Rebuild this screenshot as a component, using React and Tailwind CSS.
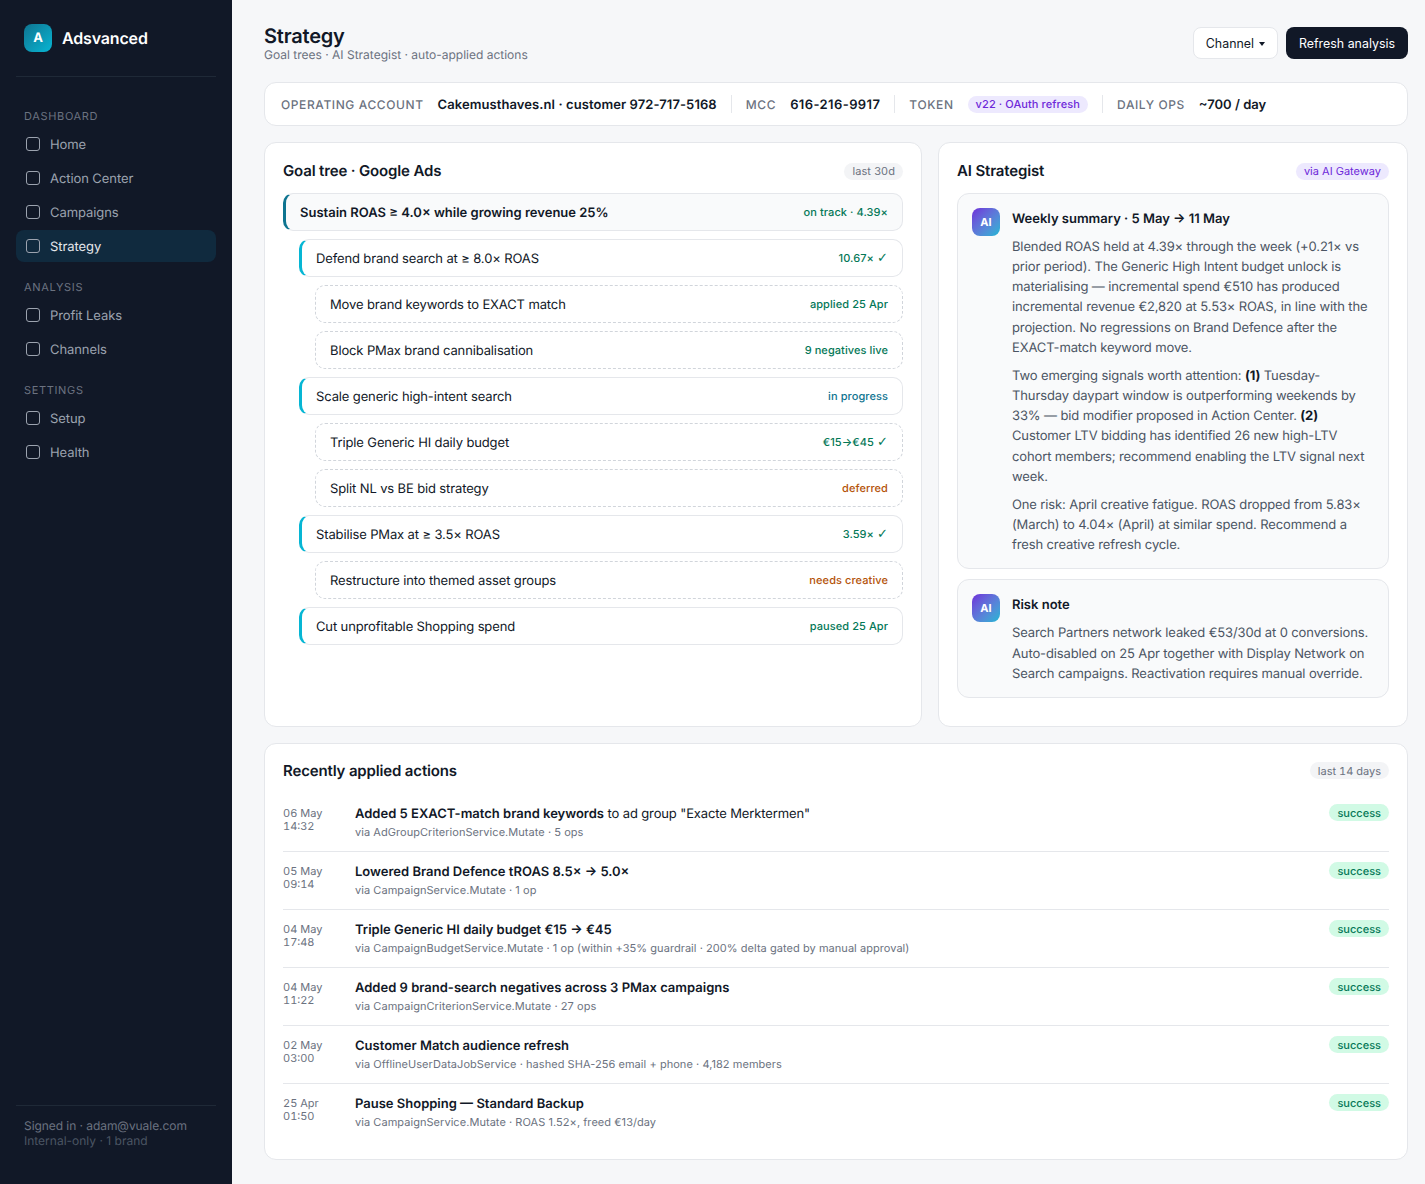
import React from "react";

const nav = [
  { h: "DASHBOARD", items: ["Home", "Action Center", "Campaigns", "Strategy"] },
  { h: "ANALYSIS", items: ["Profit Leaks", "Channels"] },
  { h: "SETTINGS", items: ["Setup", "Health"] },
];

const green = "text-[#047857]";
const orange = "text-[#b45309]";

const tree = [
  { l: 1, t: "Defend brand search at ≥ 8.0× ROAS", s: "10.67×", k: true, c: green },
  { l: 2, t: "Move brand keywords to EXACT match", s: "applied 25 Apr", c: green },
  { l: 2, t: "Block PMax brand cannibalisation", s: "9 negatives live", c: green },
  { l: 1, t: "Scale generic high-intent search", s: "in progress", c: "text-[#0e7490]" },
  { l: 2, t: "Triple Generic HI daily budget", s: "€15→€45", k: true, c: green },
  { l: 2, t: "Split NL vs BE bid strategy", s: "deferred", c: orange },
  { l: 1, t: "Stabilise PMax at ≥ 3.5× ROAS", s: "3.59×", k: true, c: green },
  { l: 2, t: "Restructure into themed asset groups", s: "needs creative", c: orange },
  { l: 1, t: "Cut unprofitable Shopping spend", s: "paused 25 Apr", c: green },
];

const actions = [
  { d: "06 May", h: "14:32", b: "Added 5 EXACT-match brand keywords", r: " to ad group \"Exacte Merktermen\"", v: "via AdGroupCriterionService.Mutate · 5 ops" },
  { d: "05 May", h: "09:14", b: "Lowered Brand Defence tROAS 8.5× → 5.0×", r: "", v: "via CampaignService.Mutate · 1 op" },
  { d: "04 May", h: "17:48", b: "Triple Generic HI daily budget €15 → €45", r: "", v: "via CampaignBudgetService.Mutate · 1 op (within +35% guardrail · 200% delta gated by manual approval)" },
  { d: "04 May", h: "11:22", b: "Added 9 brand-search negatives across 3 PMax campaigns", r: "", v: "via CampaignCriterionService.Mutate · 27 ops" },
  { d: "02 May", h: "03:00", b: "Customer Match audience refresh", r: "", v: "via OfflineUserDataJobService · hashed SHA-256 email + phone · 4,182 members" },
  { d: "25 Apr", h: "01:50", b: "Pause Shopping — Standard Backup", r: "", v: "via CampaignService.Mutate · ROAS 1.52×, freed €13/day" },
];

function AiIcon() {
  return (
    <div className="w-7 h-7 shrink-0 rounded-lg bg-gradient-to-br from-[#6d28d9] to-[#06b6d4] flex items-center justify-center text-white text-[11px] font-bold">
      AI
    </div>
  );
}

function Sep() {
  return <div className="w-px h-[18px] bg-[#e5e7eb]" />;
}

function Label({ children }) {
  return <span className="pt-[2px] text-[12px] font-medium tracking-[0.05em] text-[#6b7280]">{children}</span>;
}

function Status({ n }) {
  return (
    <span className={`pt-[1px] text-[11px] font-medium tracking-[0.08px] ${n.c}`}>
      {n.s}
      {n.k ? " " : null}
      {n.k ? <span className="font-['DejaVu_Sans'] font-normal text-[13px] leading-none">✓</span> : null}
    </span>
  );
}

export default function App() {
  return (
    <div className="flex min-h-[1184px] bg-[#f6f7f9] text-[#111827] font-['Inter',sans-serif] antialiased [text-rendering:geometricPrecision]">
      <aside className="w-[232px] shrink-0 bg-[#111827] flex flex-col px-4 pt-6 pb-6">
        <div className="flex items-center gap-[10px] px-2 pb-6 border-b border-[#1f2937]">
          <div className="w-7 h-7 pt-[2px] rounded-lg bg-gradient-to-br from-[#0e7490] to-[#06b6d4] flex items-center justify-center text-white text-[13px] font-bold">
            A
          </div>
          <span className="text-white text-[16px] font-semibold leading-7 tracking-[-0.01em]">Adsvanced</span>
        </div>
        <nav className="flex flex-col mt-[29px]">
          {nav.map((g) => (
            <div key={g.h} className="mb-[15px]">
              <div className="px-2 text-[11px] leading-[20px] tracking-[0.06em] text-[#6b7280] mb-[2px]">{g.h}</div>
              <div className="flex flex-col gap-[2px]">
                {g.items.map((i) => (
                  <div
                    key={i}
                    className={`h-8 flex items-center gap-[10px] px-[10px] rounded-lg text-[13px] tracking-[-0.08px] ${
                      i === "Strategy" ? "bg-[#102a3e] text-[#e5e7eb]" : "text-[#9ca3af]"
                    }`}
                  >
                    <span className="w-[14px] h-[14px] rounded-[3px] border border-[#9ca3af]" />
                    <span className="pt-[3px]">{i}</span>
                  </div>
                ))}
              </div>
            </div>
          ))}
        </nav>
        <div className="mt-auto border-t border-[#1f2937] px-2 pt-3 pb-[12px] text-[12px] leading-[15px]">
          <div className="text-[#6b7280] tracking-[-0.06px]">Signed in · adam@vuale.com</div>
          <div className="text-[#4b5563]">Internal-only · 1 brand</div>
        </div>
      </aside>

      <main className="flex-1 min-w-0 pl-8 pr-[17px] pt-[24px] pb-6 flex flex-col gap-4">
        <header className="flex items-start justify-between h-[42px]">
          <div>
            <h1 className="text-[20px] font-semibold leading-[24px] tracking-[-0.01em]">Strategy</h1>
            <p className="text-[12px] leading-[14px] text-[#6b7280]">Goal trees · AI Strategist · auto-applied actions</p>
          </div>
          <div className="flex gap-2 mt-[3px]">
            <button className="h-8 px-3 rounded-lg bg-white border border-[#e5e7eb] text-[12.4px] flex items-center gap-[5px]">
              <span className="pt-[2px]">Channel</span>
              <span className="w-0 h-0 border-x-[3.5px] border-x-transparent border-t-[4px] border-t-[#111827] mt-[1px]" />
            </button>
            <button className="h-8 pt-[2px] px-[13px] rounded-lg bg-[#111827] text-white text-[12.4px]">Refresh analysis</button>
          </div>
        </header>

        <section className="h-[44px] bg-white border border-[#e5e7eb] rounded-xl px-4 flex items-center gap-[14px] text-[13px]">
          <Label>OPERATING ACCOUNT</Label>
          <span className="pt-[3px] font-semibold tracking-[0.08px]">Cakemusthaves.nl · customer 972-717-5168</span>
          <Sep />
          <Label>MCC</Label>
          <span className="pt-[3px] font-semibold tracking-[0.4px]">616-216-9917</span>
          <Sep />
          <Label>TOKEN</Label>
          <span className="px-2 h-[17px] pt-[1px] flex items-center rounded-full bg-[#ede9fe] text-[#6d28d9] text-[11px] font-medium tracking-[0.1px]">v22 · OAuth refresh</span>
          <Sep />
          <Label>DAILY OPS</Label>
          <span className="pt-[3px] font-semibold">~700 / day</span>
        </section>

        <div className="grid grid-cols-[1.4fr_1fr] gap-4">
          <section className="bg-white border border-[#e5e7eb] rounded-xl p-[18px]">
            <div className="flex items-center justify-between h-[20px] mb-[12px]">
              <h2 className="text-[15px] font-semibold tracking-[-0.01em]">Goal tree · Google Ads</h2>
              <span className="px-2 h-[17px] flex items-center rounded-full bg-[#f3f4f6] text-[#6b7280] text-[11px] tracking-[0.1px]">last 30d</span>
            </div>
            <div className="flex flex-col gap-2">
              <div className="h-[38px] flex items-center justify-between px-[14px] rounded-[10px] border border-[#e5e7eb] border-l-[3px] border-l-[#0e7490] bg-[#f9fafb]">
                <span className="pt-[3px] text-[13px] font-semibold">Sustain ROAS ≥ 4.0× while growing revenue 25%</span>
                <Status n={{ s: "on track · 4.39×", c: green }} />
              </div>
              {tree.map((n) => (
                <div
                  key={n.t}
                  className={
                    n.l === 1
                      ? "ml-4 h-[38px] flex items-center justify-between px-[14px] rounded-[10px] bg-white border border-[#e5e7eb] border-l-[3px] border-l-[#06b6d4]"
                      : "ml-8 h-[38px] flex items-center justify-between px-[14px] rounded-[10px] bg-white border border-dashed border-[#d1d5db]"
                  }
                >
                  <span className="pt-[3px] text-[13px] tracking-[-0.13px]">{n.t}</span>
                  <Status n={n} />
                </div>
              ))}
            </div>
          </section>

          <section className="bg-white border border-[#e5e7eb] rounded-xl p-[18px]">
            <div className="flex items-center justify-between h-[20px] mb-[12px]">
              <h2 className="text-[15px] font-semibold tracking-[-0.01em]">AI Strategist</h2>
              <span className="px-2 h-[17px] flex items-center rounded-full bg-[#ede9fe] text-[#6d28d9] text-[11px]">via AI Gateway</span>
            </div>
            <div className="flex flex-col gap-[10px] mb-[10px]">
              <div className="flex gap-3 p-[14px] pb-[13px] rounded-xl border border-[#e5e7eb] bg-[#f9fafb]">
                <AiIcon />
                <div>
                  <div className="text-[13px] font-semibold pt-[2px] leading-[18px] mb-[9px]">Weekly summary · 5 May → 11 May</div>
                  <div className="text-[13px] leading-[20.15px] tracking-[-0.12px] text-[#4b5563] flex flex-col gap-2">
                    <p>
                      Blended ROAS held at 4.39× through the week (+0.21× vs prior period). The Generic High Intent budget unlock is materialising — incremental spend €510 has produced incremental revenue €2,820 at 5.53× ROAS, in line with the projection. No regressions on Brand Defence after the EXACT-match keyword move.
                    </p>
                    <p>
                      Two emerging signals worth attention: <strong className="text-[#111827]">(1)</strong> Tuesday-Thursday daypart window is outperforming weekends by 33% — bid modifier proposed in Action Center. <strong className="text-[#111827]">(2)</strong> Customer LTV bidding has identified 26 new high-LTV cohort members; recommend enabling the LTV signal next week.
                    </p>
                    <p>
                      One risk: April creative fatigue. ROAS dropped from 5.83× (March) to 4.04× (April) at similar spend. Recommend a fresh creative refresh cycle.
                    </p>
                  </div>
                </div>
              </div>
              <div className="flex gap-3 p-[14px] pb-[13px] rounded-xl border border-[#e5e7eb] bg-[#f9fafb]">
                <AiIcon />
                <div>
                  <div className="text-[13px] font-semibold pt-[2px] leading-[18px] mb-[9px]">Risk note</div>
                  <p className="text-[13px] leading-[20.15px] tracking-[-0.12px] text-[#4b5563]">
                    Search Partners network leaked €53/30d at 0 conversions. Auto-disabled on 25 Apr together with Display Network on Search campaigns. Reactivation requires manual override.
                  </p>
                </div>
              </div>
            </div>
          </section>
        </div>

        <section className="bg-white border border-[#e5e7eb] rounded-xl px-[18px] pt-[17px] pb-[17px]">
          <div className="flex items-center justify-between h-[20px] mb-[13px]">
            <h2 className="text-[15px] font-semibold tracking-[-0.01em]">Recently applied actions</h2>
            <span className="px-2 h-[17px] flex items-center rounded-full bg-[#f3f4f6] text-[#6b7280] text-[11px] tabular-nums">last 14 days</span>
          </div>
          <div className="flex flex-col">
            {actions.map((a, i) => (
              <div key={i} className={`h-[58px] pt-[11px] flex ${i < actions.length - 1 ? "border-b border-[#e5e7eb]" : ""}`}>
                <div className="w-[72px] shrink-0 text-[11px] leading-[13px] text-[#6b7280] pt-[2px] tabular-nums">
                  <div>{a.d}</div>
                  <div>{a.h}</div>
                </div>
                <div className="flex-1">
                  <div className="text-[13px] leading-[18px]">
                    <span className="font-semibold">{a.b}</span>
                    <span className="tracking-[-0.13px]">{a.r}</span>
                  </div>
                  <div className="text-[11px] leading-[14px] mt-[2px] tracking-[0.05px] text-[#6b7280]">{a.v}</div>
                </div>
                <span className="h-[17px] -mt-[1px] pt-[2px] px-2 flex items-center rounded-full bg-[#d1fae5] text-[#047857] text-[11px] font-medium">success</span>
              </div>
            ))}
          </div>
        </section>
      </main>
    </div>
  );
}
